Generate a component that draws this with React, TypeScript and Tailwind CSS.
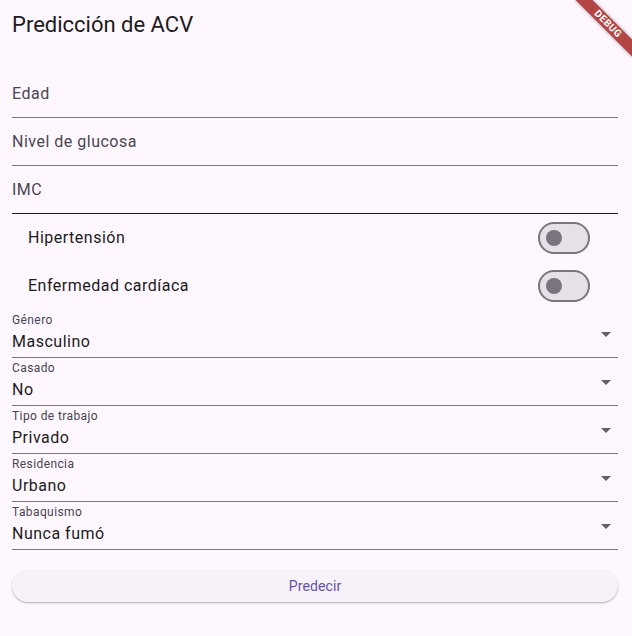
const textFields = ["Edad", "Nivel de glucosa", "IMC"];

const switches = ["Hipertensión", "Enfermedad cardíaca"];

const dropdowns = [
	{ label: "Género", value: "Masculino" },
	{ label: "Casado", value: "No" },
	{ label: "Tipo de trabajo", value: "Privado" },
	{ label: "Residencia", value: "Urbano" },
	{ label: "Tabaquismo", value: "Nunca fumó" },
];

function ArrowDropDown() {
	return (
		<svg viewBox="0 0 24 24" className="h-6 w-6 fill-[#616161]" aria-hidden="true">
			<path d="M7 10l5 5 5-5z" />
		</svg>
	);
}

function OffSwitch() {
	return (
		<div className="flex h-8 w-[52px] items-center rounded-full border-2 border-[#79747e] bg-[#e6e0e9]">
			<div className="ml-[6px] h-4 w-4 rounded-full bg-[#79747e]" />
		</div>
	);
}

function App() {
	return (
		<div className="relative h-[636px] w-full overflow-hidden bg-[#fef7ff] font-['Roboto',sans-serif] text-[#1d1b20]">
			<header className="flex h-[50px] items-center pl-3">
				<h1 className="text-[22px] leading-7 font-normal">Predicción de ACV</h1>
			</header>

			<div className="pl-3 pr-[14px] pt-5">
				{textFields.map((label, i) => (
					<div
						key={label}
						className={
							i === textFields.length - 1
								? "flex h-12 items-center border-b border-[#1d1b20]"
								: "flex h-12 items-center border-b border-[#79747e]"
						}
					>
						<span className="text-base leading-6 tracking-[0.5px] text-[#49454f]">{label}</span>
					</div>
				))}

				{switches.map((label) => (
					<div key={label} className="flex h-12 items-center justify-between pl-4 pr-7">
						<span className="text-base leading-6 tracking-[0.5px]">{label}</span>
						<OffSwitch />
					</div>
				))}

				{dropdowns.map((item) => (
					<div key={item.label} className="flex h-12 items-center border-b border-[#79747e]">
						<div className="flex h-full flex-1 flex-col pt-[2px]">
							<span className="text-xs leading-4 tracking-[0.4px] text-[#49454f]">{item.label}</span>
							<span className="mt-[2px] text-base leading-6 tracking-[0.5px]">{item.value}</span>
						</div>
						<ArrowDropDown />
					</div>
				))}

				<button className="mt-5 flex h-8 w-full items-center justify-center rounded-full bg-[#f7f2fa] text-sm font-normal tracking-[0.1px] text-[#6750a4] shadow-[0_1px_2px_rgba(0,0,0,0.22),0_1px_2px_rgba(0,0,0,0.1)]">
					Predecir
				</button>
			</div>

			{/* debug banner */}
			<div className="absolute left-[568px] top-[18px] flex h-3 w-20 rotate-45 items-center justify-center bg-[#b34545] shadow-[0_0_4px_rgba(0,0,0,0.35)]">
				<span className="text-[10px] leading-none font-bold tracking-[0.5px] text-white">DEBUG</span>
			</div>
		</div>
	);
}

export default App;
